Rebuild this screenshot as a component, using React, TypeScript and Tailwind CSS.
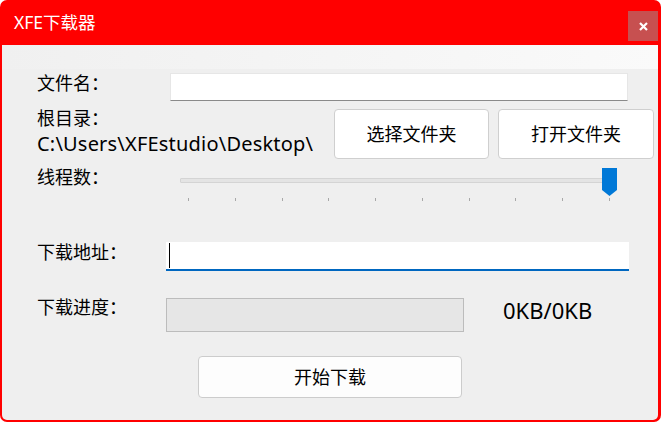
const TICKS = [0, 1, 2, 3, 4, 5, 6, 7, 8, 9];

export default function App() {
  return (
    <div className="h-[422px] w-[661px] bg-white font-['Noto_Sans','Noto_Sans_CJK_SC',sans-serif] text-black">
      <div className="flex h-full flex-col overflow-hidden rounded-[7px] bg-[#ff0000]">
        {/* title bar */}
        <div className="flex h-[45px] shrink-0 items-start justify-between pl-[14px] pr-[3px]">
          <span className="mt-[9px] text-[17.5px] leading-[26px] text-white">XFE下载器</span>
          <button className="mt-[11px] flex h-[30px] w-[30px] items-center justify-center bg-[#c75050]">
            <svg width="9" height="9" viewBox="0 0 9 9">
              <path d="M1 1L8 8M8 1L1 8" stroke="white" strokeWidth="2.2" />
            </svg>
          </button>
        </div>

        <div className="mb-[2px] ml-[2px] mr-[3px] flex flex-1 flex-col rounded-b-[5px] bg-[#efefef]">
          <div className="h-[24px] bg-gradient-to-r from-[#f0f0f0] to-[#fafafa]" />

          <div className="flex flex-col pl-[35px] text-[18px]">
            {/* file name */}
            <div className="mt-[4px] flex items-start">
              <span className="w-[133px] leading-[20px]">文件名：</span>
              <div className="h-[28px] w-[458px] border border-[#e6e6e6] border-b-[#8a8a8a] bg-white" />
            </div>

            {/* root dir */}
            <div className="mt-[8px] flex items-start">
              <div className="flex w-[297px] flex-col">
                <span className="-mt-[2px] leading-[22px]">根目录：</span>
                <span className="mt-[4px] text-[20px] leading-[22px] tracking-[0.2px]">C:\Users\XFEstudio\Desktop\</span>
              </div>
              <button className="h-[50px] w-[155px] rounded-[4px] border border-[#cfcfcf] bg-white text-[18px]">选择文件夹</button>
              <button className="ml-[9px] h-[50px] w-[156px] rounded-[4px] border border-[#cfcfcf] bg-white text-[18px]">打开文件夹</button>
            </div>

            {/* threads */}
            <div className="mt-[9px] flex items-start">
              <span className="-mt-[2px] w-[143px] leading-[22px]">线程数：</span>
              <div className="relative h-[34px] w-[437px]">
                <div className="mt-[10px] h-[5px] w-[436px] rounded-[1px] border border-[#d4d4d4] bg-[#e4e4e4]" />
                <div className="mt-[15px] flex justify-between pl-[8px] pr-[7px]">
                  {TICKS.map(i => (
                    <span key={i} className="h-[3px] w-px bg-[#a8a8a8]" />
                  ))}
                </div>
                <svg className="absolute left-[422px] top-0" width="15" height="28" viewBox="0 0 15 28">
                  <path d="M0 0H15V22L7.5 28L0 22Z" fill="#0078d7" />
                </svg>
              </div>
            </div>

            {/* url */}
            <div className="mt-[40px] flex items-start">
              <span className="-mt-[1px] w-[129px] leading-[22px]">下载地址：</span>
              <div className="flex h-[29px] w-[463px] items-center border-b-2 border-[#0067c0] bg-white pl-[3px]">
                <span className="h-[25px] w-px bg-black" />
              </div>
            </div>

            {/* progress */}
            <div className="mt-[27px] flex items-start">
              <span className="-mt-[2px] w-[129px] leading-[22px]">下载进度：</span>
              <div className="h-[34px] w-[298px] border border-[#bcbcbc] bg-[#e6e6e6]" />
              <span className="-mt-[2px] ml-[39px] text-[22px] leading-[28px]">0KB/0KB</span>
            </div>

            {/* start */}
            <button className="ml-[161px] mt-[24px] h-[42px] w-[264px] rounded-[4px] border border-[#cccccc] bg-[#fdfdfd] text-[18px]">
              开始下载
            </button>
          </div>
        </div>
      </div>
    </div>
  );
}
